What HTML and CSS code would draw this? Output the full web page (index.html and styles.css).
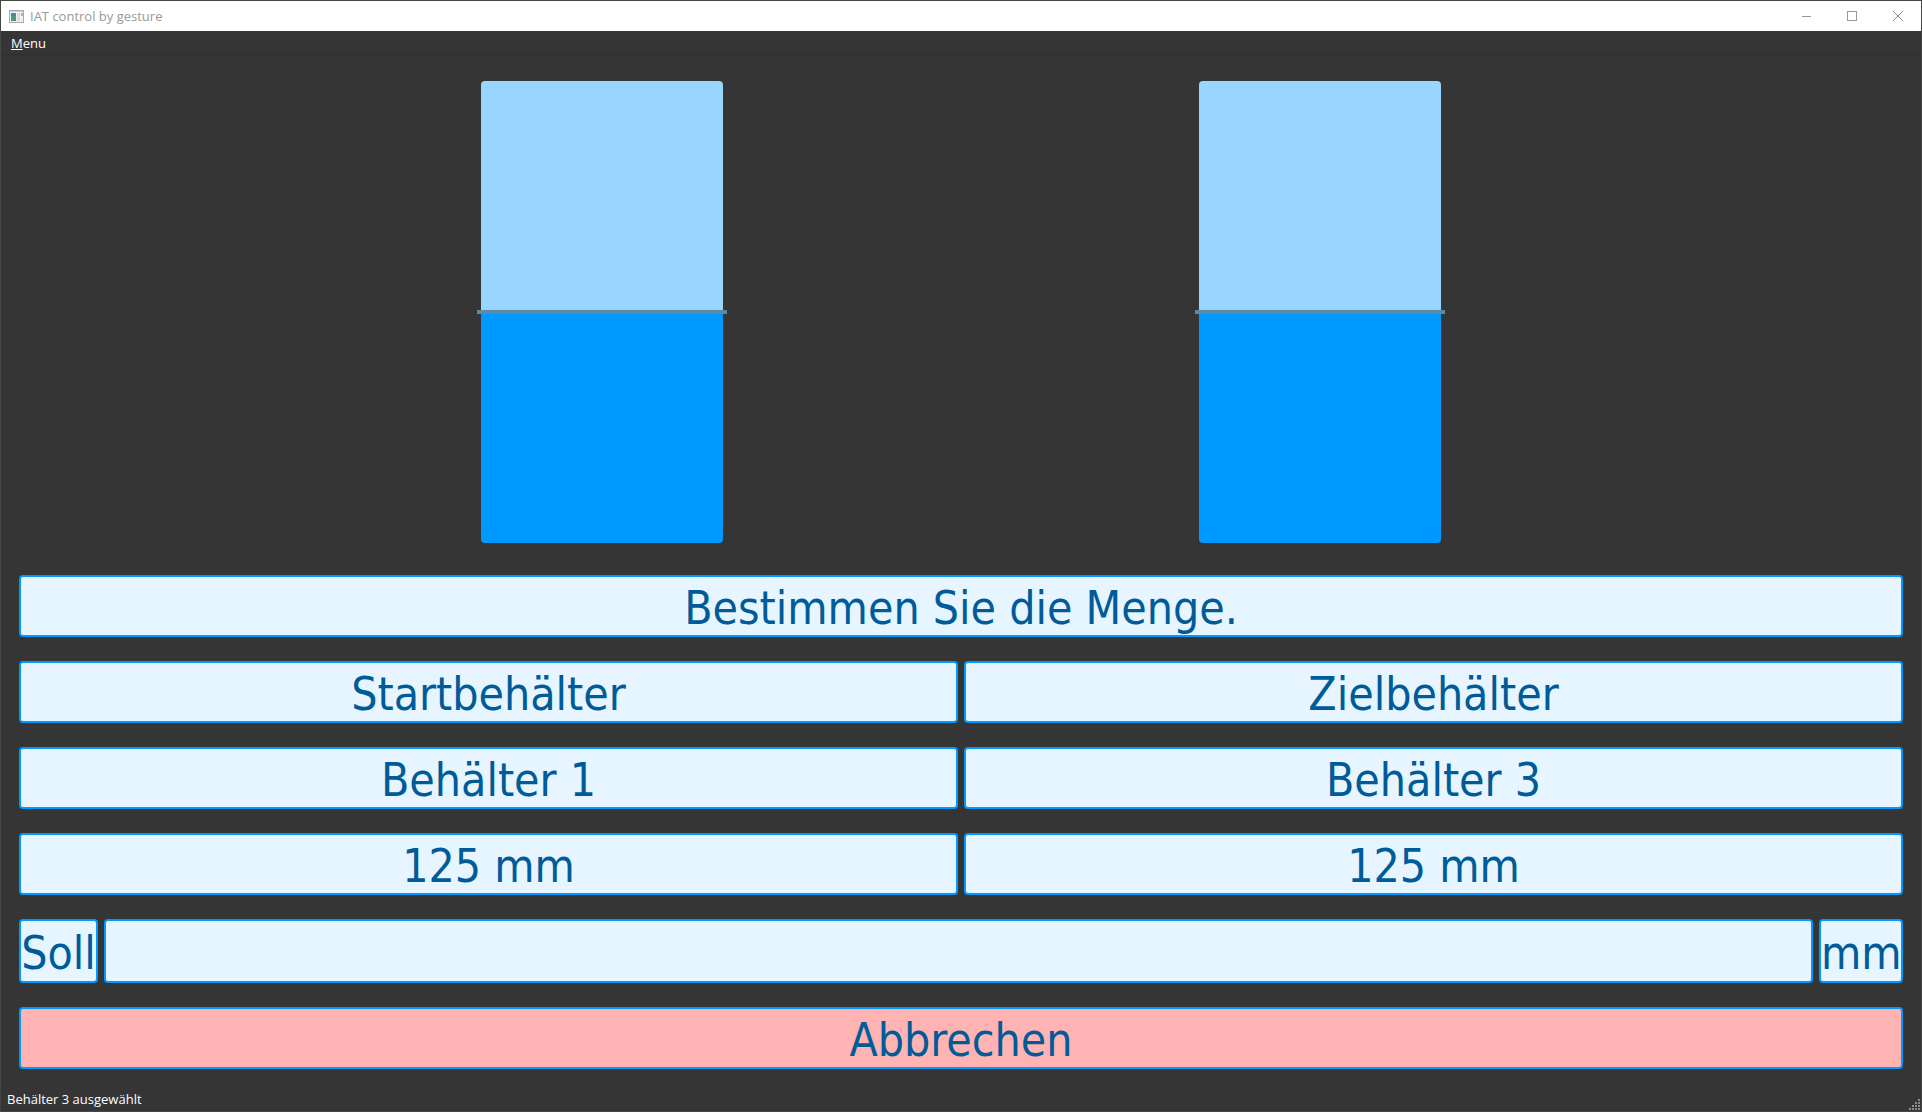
FILE: index.html
```html
<!DOCTYPE html>
<html lang="de">
<head>
<meta charset="utf-8">
<meta name="viewport" content="width=device-width, initial-scale=1">
<title>IAT control by gesture</title>
<link rel="stylesheet" href="styles.css">
</head>
<body>
<div class="window">
  <header class="titlebar">
    <svg class="app-icon" width="15" height="13" viewBox="0 0 15 13" aria-hidden="true">
      <rect x="0.5" y="0.5" width="14" height="12" fill="#f1f1f2" stroke="#a6aaae"/>
      <rect x="1" y="1" width="13" height="1" fill="#c9cdd2"/>
      <rect x="2" y="3" width="5" height="8" fill="#4d9a83"/>
      <rect x="2" y="3" width="5" height="3" fill="#4b87a0"/>
      <rect x="8" y="3" width="3" height="8" fill="#dcdcde"/>
      <rect x="12" y="3" width="2" height="3" fill="#8fc7a6"/>
    </svg>
    <h1 class="title">IAT control by gesture</h1>
    <div class="window-controls">
      <button class="window-button" type="button" aria-label="Minimieren">
        <svg width="10" height="10" viewBox="0 0 10 10"><path d="M1 5.5H10" stroke="#999" fill="none"/></svg>
      </button>
      <button class="window-button" type="button" aria-label="Maximieren">
        <svg width="10" height="10" viewBox="0 0 10 10"><rect x="0.5" y="0.5" width="9" height="9" stroke="#999" fill="none"/></svg>
      </button>
      <button class="window-button" type="button" aria-label="Schließen">
        <svg width="10" height="10" viewBox="0 0 10 10"><path d="M0 0L10 10M10 0L0 10" stroke="#8c8c8c" fill="none"/></svg>
      </button>
    </div>
  </header>
  <nav class="menubar">
    <button class="menu-item" type="button"><u>M</u>enu</button>
  </nav>
  <main class="content">
    <section class="tanks">
      <div class="tank"><div class="tank-empty"></div><div class="tank-level"></div><div class="tank-fill"></div></div>
      <div class="tank"><div class="tank-empty"></div><div class="tank-level"></div><div class="tank-fill"></div></div>
    </section>
    <form class="panel">
      <p class="field">Bestimmen Sie die Menge.</p>
      <div class="pair">
        <p class="field">Startbehälter</p>
        <p class="field">Zielbehälter</p>
      </div>
      <div class="pair">
        <p class="field">Behälter 1</p>
        <p class="field">Behälter 3</p>
      </div>
      <div class="pair">
        <p class="field">125 mm</p>
        <p class="field">125 mm</p>
      </div>
      <div class="target">
        <label class="field" for="amount">Soll</label>
        <input class="field" id="amount" type="text">
        <label class="field" for="amount">mm</label>
      </div>
      <button class="field field-cancel" type="button">Abbrechen</button>
    </form>
  </main>
  <footer class="statusbar">
    <span class="status">Behälter 3 ausgewählt</span>
    <svg class="grip" width="11" height="11" viewBox="0 0 11 11" fill="#8c8c8c" aria-hidden="true">
      <path d="M9 0h2v2h-2zM6 3h2v2h-2zM9 3h2v2h-2zM3 6h2v2h-2zM6 6h2v2h-2zM9 6h2v2h-2zM0 9h2v2h-2zM3 9h2v2h-2zM6 9h2v2h-2zM9 9h2v2h-2z"/>
    </svg>
  </footer>
</div>
</body>
</html>
```

FILE: styles.css
```css
* {
  box-sizing: border-box;
}

body {
  margin: 0;
  background: #353535;
  color: #fff;
  font: 13px/18px "Open Sans", "Noto Sans", sans-serif;
}

button {
  padding: 0;
  border: 0;
  background: none;
  color: inherit;
  font: inherit;
}

.window {
  display: flex;
  flex-direction: column;
  min-height: 100vh;
  border: 1px solid #464646;
}

.titlebar {
  display: flex;
  align-items: center;
  height: 30px;
  padding-left: 8px;
  background: #fff;
  color: #999;
}

.app-icon {
  margin-right: 6px;
}

.title {
  flex: 1;
  margin: 0;
  font-size: 13px;
  font-weight: 400;
}

.window-controls {
  display: flex;
}

.window-button {
  display: flex;
  align-items: center;
  justify-content: center;
  width: 46px;
  height: 28px;
}

.menubar {
  display: flex;
  height: 24px;
  padding-left: 10px;
  border-bottom: 1px solid #2e2e2e;
}

.content {
  display: flex;
  flex: 1;
  flex-direction: column;
  padding: 26px 18px 16px;
}

.tanks {
  display: flex;
  flex: 1;
  justify-content: space-evenly;
  min-height: 200px;
  margin: 0 -10px 32px;
}

.tank {
  display: flex;
  flex-direction: column;
  width: 250px;
}

.tank-empty,
.tank-fill {
  flex: 1;
  margin: 0 4px;
}

.tank-empty {
  border-radius: 4px 4px 0 0;
  background: #99d6ff;
}

.tank-level {
  height: 4px;
  background: #5b8aa8;
}

.tank-fill {
  border-radius: 0 0 4px 4px;
  background: #0099ff;
}

.panel {
  display: flex;
  flex-direction: column;
  gap: 24px;
}

.pair {
  display: grid;
  grid-template-columns: 1fr 1fr;
  gap: 6px;
}

.target {
  display: grid;
  grid-template-columns: 79px 1fr 84px;
  gap: 6px;
}

.field {
  min-width: 0;
  height: 62px;
  margin: 0;
  padding: 2px 0 0;
  border: 2px solid #0099ff;
  border-radius: 4px;
  background: #e6f5ff;
  color: #005c99;
  font: 46px/58px "DejaVu Sans Condensed", "DejaVu Sans", sans-serif;
  text-align: center;
  white-space: nowrap;
}

.target .field {
  height: 64px;
  line-height: 60px;
}

.field-cancel {
  background: #ffb3b3;
}

.statusbar {
  display: flex;
  align-items: center;
  justify-content: space-between;
  height: 26px;
  padding: 2px 1px 0 6px;
}

.grip {
  align-self: flex-end;
  margin-bottom: 1px;
}
```
